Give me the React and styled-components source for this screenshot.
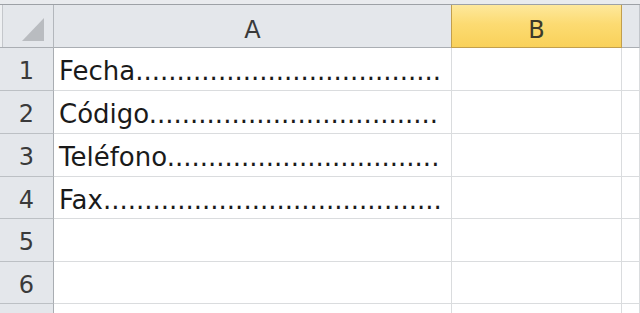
import React from "react";
import styled, { createGlobalStyle } from "styled-components";

const Global = createGlobalStyle`
  html, body { margin: 0; padding: 0; background: #ffffff; overflow: hidden; }
  body { font-family: "DejaVu Sans", "Liberation Sans", sans-serif; }
`;

const Sheet = styled.div`
  width: 640px;
  height: 313px;
  overflow: hidden;
  display: grid;
  grid-template-columns: 54px 398px 170px 1fr;
  grid-template-rows: 5px 43px 43px 43px 43px 42px 43px 42px 43px;
  background: #ffffff;
`;

const TopStrip = styled.div`
  grid-column: 1 / -1;
  background: #e9ebee;
  border-bottom: 1px solid #9da1a6;
`;

const Corner = styled.div`
  background: #e4e7eb;
  border-right: 1px solid #b3b7bc;
  border-bottom: 1px solid #aaaeb3;
  box-shadow: inset 2px 0 0 #eef0f2, inset 3px 0 0 #c4c7cb;
  display: flex;
  justify-content: flex-end;
  align-items: flex-end;
  padding: 0 9px 6px 0;
`;

const ColHeader = styled.div`
  box-sizing: border-box;
  display: flex;
  justify-content: center;
  align-items: flex-start;
  padding-top: 10px;
  font-size: 24px;
  line-height: 30px;
  color: ${(p) => (p.$selected ? "#3d3a2a" : "#3a3a3a")};
  background: ${(p) =>
    p.$selected
      ? "linear-gradient(to bottom, #fee89c 0%, #fcdb72 45%, #f9d15a 100%)"
      : "#e4e7eb"};
  border-bottom: 1px solid ${(p) => (p.$selected ? "#c29f4d" : "#aaaeb3")};
  border-right: 1px solid ${(p) => (p.$selected ? "#c29f4d" : "#c2c6cb")};
  border-left: ${(p) => (p.$selected ? "1px solid #c29f4d" : "none")};
  margin-left: ${(p) => (p.$selected ? "-1px" : "0")};
`;

const RowHeader = styled.div`
  background: #e4e7eb;
  border-right: 1px solid #a9adb2;
  border-bottom: 1px solid #bcc0c4;
  display: flex;
  justify-content: center;
  align-items: flex-start;
  padding-top: 8px;
  font-size: 24px;
  line-height: 30px;
  color: #3a3a3a;
`;

const Cell = styled.div`
  border-right: 1px solid #dadcde;
  border-bottom: 1px solid #dadcde;
  display: flex;
  align-items: flex-start;
  padding: 8px 0 0 5px;
  font-size: 26px;
  line-height: 30px;
  color: #1a1a1a;
  white-space: nowrap;
  overflow: hidden;
`;

const Triangle = () => (
  <svg width="22" height="23" viewBox="0 0 22 23">
    <polygon points="22,0 22,23 0,23" fill="#b9bcc0" />
  </svg>
);

const dots = (n) => ".".repeat(n);

const rows = [
  { n: "1", a: "Fecha" + dots(37) },
  { n: "2", a: "Código" + dots(35) },
  { n: "3", a: "Teléfono" + dots(33) },
  { n: "4", a: "Fax" + dots(41) },
  { n: "5", a: "" },
  { n: "6", a: "" },
  { n: "", a: "" },
];

export default function App() {
  return (
    <>
      <Global />
      <Sheet>
        <TopStrip />
        <Corner>
          <Triangle />
        </Corner>
        <ColHeader>A</ColHeader>
        <ColHeader $selected>B</ColHeader>
        <ColHeader />
        {rows.map((r, i) => (
          <React.Fragment key={i}>
            <RowHeader>{r.n}</RowHeader>
            <Cell>{r.a}</Cell>
            <Cell />
            <Cell />
          </React.Fragment>
        ))}
      </Sheet>
    </>
  );
}
